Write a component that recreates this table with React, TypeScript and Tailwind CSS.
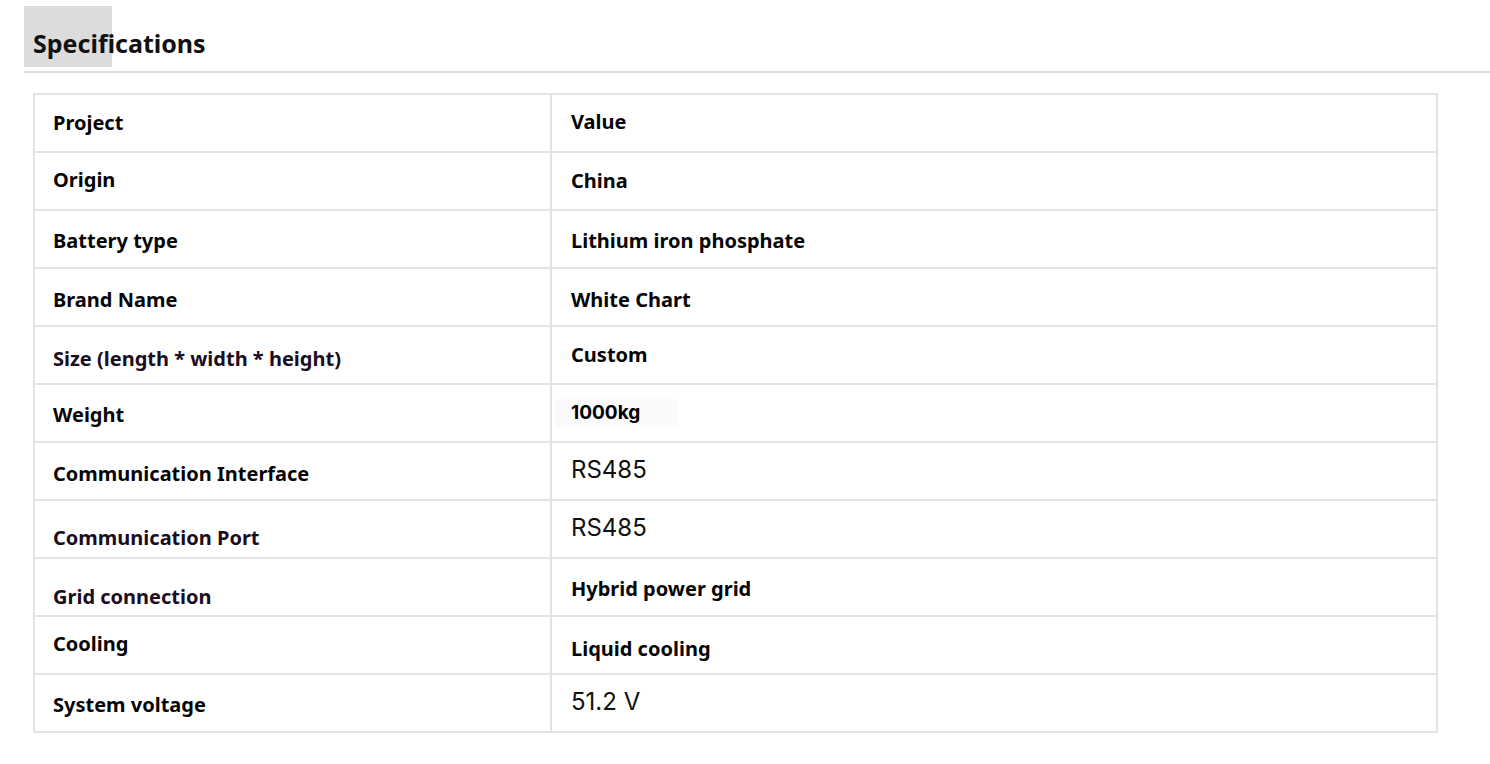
import React from "react";

type Row = {
  k: string;
  v: string;
  kpt: string;
  vpt: string;
  kDark?: boolean;
  vType?: "bold" | "plain" | "kg";
};

const rows: Row[] = [
  { k: "Project", v: "Value", kpt: "pt-[15px]", vpt: "pt-[14px]" },
  { k: "Origin", v: "China", kpt: "pt-[14px]", vpt: "pt-[15px]" },
  { k: "Battery type", v: "Lithium iron phosphate", kpt: "pt-[17px]", vpt: "pt-[17px]" },
  { k: "Brand Name", v: "White Chart", kpt: "pt-[18px]", vpt: "pt-[18px]" },
  { k: "Size (length * width * height)", v: "Custom", kpt: "pt-[19px]", vpt: "pt-[15px]", kDark: true },
  { k: "Weight", v: "1000kg", kpt: "pt-[17px]", vpt: "pt-[14px]", vType: "kg" },
  { k: "Communication Interface", v: "RS485", kpt: "pt-[18px]", vpt: "pt-[14px]", vType: "plain" },
  { k: "Communication Port", v: "RS485", kpt: "pt-[24px]", vpt: "pt-[14px]", kDark: true, vType: "plain" },
  { k: "Grid connection", v: "Hybrid power grid", kpt: "pt-[25px]", vpt: "pt-[17px]", kDark: true },
  { k: "Cooling", v: "Liquid cooling", kpt: "pt-[14px]", vpt: "pt-[19px]" },
  { k: "System voltage", v: "51.2 V", kpt: "pt-[17px]", vpt: "pt-[14px]", vType: "plain" },
];

const noto = { fontFamily: '"Noto Sans", "Open Sans", sans-serif' };
const inter = { fontFamily: 'Inter, Roboto, "Liberation Sans", sans-serif' };

export default function App() {
  return (
    <div className="w-[1490px] h-[764px] bg-white overflow-hidden">
      <div className="pl-[24px] pt-[6px]">
        <div className="relative h-[61px] flex items-center">
          <span className="absolute left-0 top-0 w-[88px] h-[61px] bg-[#dcdcdc]" />
          <h2
            className="relative pl-[9px] pt-[12px] text-[25px] leading-[32px] font-bold text-[#111]"
            style={noto}
          >
            Specifications
          </h2>
        </div>
        <div className="mt-[4px] h-[2px] bg-[#dedede]" />
      </div>

      <div className="ml-[33px] mt-[20px] w-[1405px] border-2 border-[#e3e3e3]">
        {rows.map((r, i) => (
          <div
            key={i}
            className={
              "flex " +
              (i < rows.length - 1 ? "h-[58px] border-b-2 border-[#e3e3e3]" : "h-[56px]")
            }
          >
            <div className={"w-[515px] pl-[18px] " + r.kpt}>
              <span
                className={
                  "block text-[20px] leading-[26px] font-bold " +
                  (r.kDark ? "text-[#1a0d1f]" : "text-[#050505]")
                }
                style={noto}
              >
                {r.k}
              </span>
            </div>
            <div className={"flex-1 border-l-2 border-[#e3e3e3] pl-[19px] " + r.vpt}>
              {r.vType === "plain" ? (
                <span
                  className="block text-[24px] leading-[26px] font-normal text-[#111]"
                  style={inter}
                >
                  {r.v}
                </span>
              ) : r.vType === "kg" ? (
                <span
                  className="inline-block -ml-[16px] pl-[16px] pr-[38px] text-[19px] leading-[28px] font-bold text-[#000] bg-[#fafafa]"
                  style={inter}
                >
                  {r.v}
                </span>
              ) : (
                <span
                  className="block text-[20px] leading-[26px] font-bold text-[#050505]"
                  style={noto}
                >
                  {r.v}
                </span>
              )}
            </div>
          </div>
        ))}
      </div>
    </div>
  );
}
